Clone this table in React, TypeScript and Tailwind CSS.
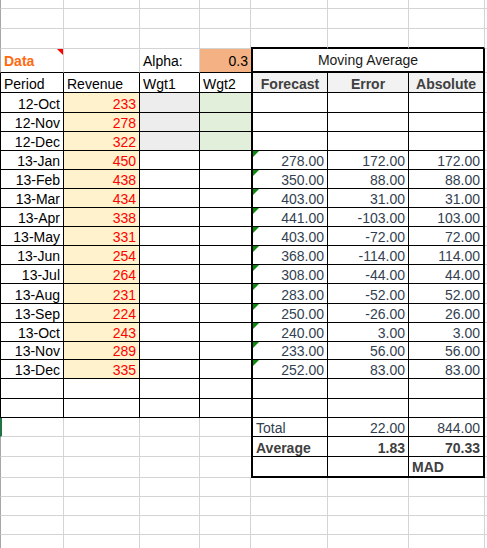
import type { ReactNode } from 'react'

const W = ['w-[64px]', 'w-[76px]', 'w-[60px]', 'w-[51px]', 'w-[77px]', 'w-[81px]', 'w-[76px]', 'flex-1']

// cell borders
const GRID = 'border-r border-b border-[#d4d4d4]'
const INK = 'border-r border-b border-black'

const NUM = 'justify-end text-[#333f50]'

interface DataRow {
  period: string
  revenue: number
  forecast?: string
  error?: string
  absolute?: string
  h: string
}

const DATA: DataRow[] = [
  { period: '12-Oct', revenue: 233, h: 'h-[20px]' },
  { period: '12-Nov', revenue: 278, h: 'h-[19px]' },
  { period: '12-Dec', revenue: 322, h: 'h-[19px]' },
  { period: '13-Jan', revenue: 450, forecast: '278.00', error: '172.00', absolute: '172.00', h: 'h-[19px]' },
  { period: '13-Feb', revenue: 438, forecast: '350.00', error: '88.00', absolute: '88.00', h: 'h-[19px]' },
  { period: '13-Mar', revenue: 434, forecast: '403.00', error: '31.00', absolute: '31.00', h: 'h-[19px]' },
  { period: '13-Apr', revenue: 338, forecast: '441.00', error: '-103.00', absolute: '103.00', h: 'h-[19px]' },
  { period: '13-May', revenue: 331, forecast: '403.00', error: '-72.00', absolute: '72.00', h: 'h-[19px]' },
  { period: '13-Jun', revenue: 254, forecast: '368.00', error: '-114.00', absolute: '114.00', h: 'h-[19px]' },
  { period: '13-Jul', revenue: 264, forecast: '308.00', error: '-44.00', absolute: '44.00', h: 'h-[19px]' },
  { period: '13-Aug', revenue: 231, forecast: '283.00', error: '-52.00', absolute: '52.00', h: 'h-[20px]' },
  { period: '13-Sep', revenue: 224, forecast: '250.00', error: '-26.00', absolute: '26.00', h: 'h-[19px]' },
  { period: '13-Oct', revenue: 243, forecast: '240.00', error: '3.00', absolute: '3.00', h: 'h-[19px]' },
  { period: '13-Nov', revenue: 289, forecast: '233.00', error: '56.00', absolute: '56.00', h: 'h-[18px]' },
  { period: '13-Dec', revenue: 335, forecast: '252.00', error: '83.00', absolute: '83.00', h: 'h-[19px]' },
]

function Cell({ w, className = '', children }: { w: string; className?: string; children?: ReactNode }) {
  return (
    <div
      className={`relative flex shrink-0 items-end overflow-hidden whitespace-nowrap px-[3px] pb-[1px] leading-[14px] ${w} ${className}`}
    >
      {children}
    </div>
  )
}

function Row({ h, children }: { h: string; children: ReactNode }) {
  return <div className={`flex ${h}`}>{children}</div>
}

function BlankRow({ h }: { h: string }) {
  return (
    <Row h={h}>
      <Cell w={W[0]} className={`${GRID} border-l border-l-[#a6a6a6]`} />
      {W.slice(1).map((w, i) => (
        <Cell key={i} w={w} className={GRID} />
      ))}
    </Row>
  )
}

function ErrorMark() {
  return (
    <span
      className="absolute left-0 top-0 h-0 w-0 border-r-[6px] border-t-[6px] border-r-transparent border-t-[#0a8a0a]"
      aria-hidden
    />
  )
}

export default function App() {
  return (
    <div
      className="h-[548px] w-[487px] overflow-hidden bg-white text-[14px] text-black"
      style={{ fontFamily: '"Liberation Sans", Arial, sans-serif' }}
    >
      <BlankRow h="h-[9px]" />
      <BlankRow h="h-[20px]" />
      <Row h="h-[20px]">
        <Cell w={W[0]} className={`${GRID} border-l border-l-[#a6a6a6]`} />
        <Cell w={W[1]} className={GRID} />
        <Cell w={W[2]} className={GRID} />
        <Cell w={W[3]} className={GRID} />
        <Cell w={W[4]} className="border-r border-r-[#d4d4d4] border-b-2 border-b-black" />
        <Cell w={W[5]} className="border-r border-r-[#d4d4d4] border-b-2 border-b-black" />
        <Cell w={W[6]} className="border-r border-r-[#d4d4d4] border-b-2 border-b-black" />
        <Cell w={W[7]} className={GRID} />
      </Row>

      {/* title row */}
      <Row h="h-[24px]">
        <Cell
          w={W[0]}
          className="border-b border-l border-r border-b-black border-l-[#a6a6a6] border-r-[#d4d4d4] pb-[4px] font-bold text-[#ff6a10]"
        >
          Data
          <span
            className="absolute right-0 top-0 h-0 w-0 border-l-[6px] border-t-[6px] border-l-transparent border-t-[#ff0000]"
            aria-hidden
          />
        </Cell>
        <Cell w={W[1]} className="border-b border-r border-b-black border-r-[#d4d4d4]" />
        <Cell w={W[2]} className="border-b border-r border-b-black border-r-[#d4d4d4] pb-[4px]">
          Alpha:
        </Cell>
        <Cell w={W[3]} className="justify-end border-b border-b-black bg-[#f4b183] pb-[4px]">
          0.3
        </Cell>
        <Cell w="w-[234px]" className="justify-center border-b-2 border-l-2 border-r-2 border-black pb-[4px] text-[#1a1a1a]">
          Moving Average
        </Cell>
        <Cell w={W[7]} className={GRID} />
      </Row>

      {/* header row */}
      <Row h="h-[20px]">
        <Cell w={W[0]} className={`${INK} border-l`}>Period</Cell>
        <Cell w={W[1]} className={INK}>Revenue</Cell>
        <Cell w={W[2]} className={INK}>Wgt1</Cell>
        <Cell w={W[3]} className="border-b border-black">Wgt2</Cell>
        <Cell w={W[4]} className={`${INK} justify-center border-l-2 bg-[#f2f2f2] font-bold text-[#404040]`}>
          Forecast
        </Cell>
        <Cell w={W[5]} className={`${INK} justify-center bg-[#f2f2f2] font-bold text-[#404040]`}>
          Error
        </Cell>
        <Cell w={W[6]} className={`justify-center border-b border-r-2 border-black bg-[#f2f2f2] font-bold text-[#404040]`}>
          Absolute
        </Cell>
        <Cell w={W[7]} className={GRID} />
      </Row>

      {DATA.map((d, i) => (
        <Row key={d.period} h={d.h}>
          <Cell w={W[0]} className={`${INK} border-l justify-end`}>{d.period}</Cell>
          <Cell w={W[1]} className={`${INK} justify-end bg-[#fff2cc] text-[#ff0000]`}>{d.revenue}</Cell>
          <Cell w={W[2]} className={`${INK} ${i < 3 ? 'bg-[#ededed]' : ''}`} />
          <Cell w={W[3]} className={`border-b border-black ${i < 3 ? 'bg-[#e2efda]' : ''}`} />
          <Cell w={W[4]} className={`${INK} ${NUM} border-l-2`}>
            {d.forecast ? <ErrorMark /> : null}
            {d.forecast}
          </Cell>
          <Cell w={W[5]} className={`${INK} ${NUM}`}>{d.error}</Cell>
          <Cell w={W[6]} className={`border-b border-r-2 border-black ${NUM}`}>{d.absolute}</Cell>
          <Cell w={W[7]} className={GRID} />
        </Row>
      ))}

      {['h-[20px]', 'h-[19px]'].map((h, i) => (
        <Row key={i} h={h}>
          <Cell w={W[0]} className={`${INK} border-l`} />
          <Cell w={W[1]} className={INK} />
          <Cell w={W[2]} className={INK} />
          <Cell w={W[3]} className="border-b border-black" />
          <Cell w={W[4]} className={`${INK} border-l-2`} />
          <Cell w={W[5]} className={INK} />
          <Cell w={W[6]} className="border-b border-r-2 border-black" />
          <Cell w={W[7]} className={GRID} />
        </Row>
      ))}

      {/* summary rows */}
      <Row h="h-[19px]">
        <Cell w={W[0]} className={`${GRID} border-l-2 border-l-[#217346]`} />
        <Cell w={W[1]} className={GRID} />
        <Cell w={W[2]} className={GRID} />
        <Cell w={W[3]} className="border-b border-[#d4d4d4]" />
        <Cell w={W[4]} className={`${INK} border-l-2 text-[#333f50]`}>Total</Cell>
        <Cell w={W[5]} className={`${INK} ${NUM}`}>22.00</Cell>
        <Cell w={W[6]} className={`border-b border-r-2 border-black ${NUM}`}>844.00</Cell>
        <Cell w={W[7]} className={GRID} />
      </Row>
      <Row h="h-[20px]">
        <Cell w={W[0]} className={`${GRID} border-l border-l-[#a6a6a6]`} />
        <Cell w={W[1]} className={GRID} />
        <Cell w={W[2]} className={GRID} />
        <Cell w={W[3]} className="border-b border-[#d4d4d4]" />
        <Cell w={W[4]} className={`${INK} border-l-2 font-bold text-[#404040]`}>Average</Cell>
        <Cell w={W[5]} className={`${INK} justify-end font-bold text-[#404040]`}>1.83</Cell>
        <Cell w={W[6]} className="justify-end border-b border-r-2 border-black font-bold text-[#404040]">
          70.33
        </Cell>
        <Cell w={W[7]} className={GRID} />
      </Row>
      <Row h="h-[21px]">
        <Cell w={W[0]} className={`${GRID} border-l border-l-[#a6a6a6]`} />
        <Cell w={W[1]} className={GRID} />
        <Cell w={W[2]} className={GRID} />
        <Cell w={W[3]} className="border-b border-[#d4d4d4]" />
        <Cell w={W[4]} className="border-b-2 border-l-2 border-r border-black" />
        <Cell w={W[5]} className="border-b-2 border-r border-black" />
        <Cell w={W[6]} className="border-b-2 border-r-2 border-black pb-[2px] font-bold text-[#404040]">
          MAD
        </Cell>
        <Cell w={W[7]} className={GRID} />
      </Row>

      <BlankRow h="h-[19px]" />
      <BlankRow h="h-[19px]" />
      <BlankRow h="h-[19px]" />
      <BlankRow h="h-[19px]" />
    </div>
  )
}
